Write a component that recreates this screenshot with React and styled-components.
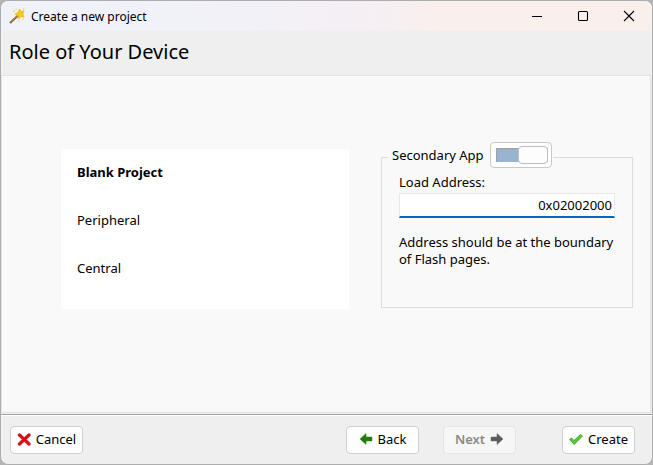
import React, { useState } from "react";
import styled, { createGlobalStyle } from "styled-components";

const GlobalStyle = createGlobalStyle`
  *, *::before, *::after { box-sizing: border-box; }
  body { margin: 0; background: #b4b4b4; }
  body, button, input {
    font-family: "Noto Sans", "Open Sans", sans-serif;
    font-size: 13px;
    line-height: 17px;
    color: #000;
  }
`;

const Window = styled.div`
  display: flex;
  flex-direction: column;
  min-height: 100vh;
  border: 1px solid #adadad;
  border-radius: 8px;
  background: #efefef;
  overflow: hidden;
`;

const TitleBar = styled.header`
  display: flex;
  align-items: center;
  height: 30px;
  padding-left: 8px;
  background: linear-gradient(90deg, #f0f2fa 0%, #f2f1f8 38%, #f5eff4 55%, #f9f0ed 68%, #f9f0ec 100%);
`;

const AppTitle = styled.span`
  flex: 1;
  padding-left: 6px;
  font-size: 12px;
`;

const CaptionButton = styled.button`
  display: flex;
  align-items: center;
  justify-content: center;
  width: 46px;
  height: 30px;
  padding: 0;
  border: 0;
  background: transparent;
`;

const Heading = styled.h1`
  margin: 0;
  padding: 8px 8px 10px;
  font-size: 20px;
  line-height: 26px;
  font-weight: 400;
`;

const Body = styled.main`
  flex: 1;
  display: grid;
  grid-template-columns: 8fr 7fr;
  align-items: start;
  gap: 32px;
  margin-right: 1px;
  padding: 66px 17px 16px 59px;
  border: 1px solid #e3e3e3;
  background: #f9f9f9;
`;

const RoleList = styled.ul`
  margin: 7px 0 0;
  padding: 0 0 16px;
  list-style: none;
  background: #fff;
`;

const RoleButton = styled.button`
  display: block;
  width: 100%;
  height: 48px;
  padding: 0 16px 2px;
  border: 0;
  background: transparent;
  text-align: left;
  font-weight: ${(p) => (p.$selected ? 700 : 400)};
`;

const Group = styled.fieldset`
  min-width: 0;
  min-height: 166px;
  margin: 0;
  padding: 0 17px;
  border: 1px solid #dcdcdc;
`;

const Legend = styled.legend`
  display: flex;
  margin-left: -11px;
  padding: 0 1px 5px 4px;
`;

const LegendLabel = styled.label`
  display: flex;
  align-items: center;
  gap: 6px;
  line-height: 26px;
`;

const SwitchFrame = styled.span`
  display: flex;
  align-items: center;
  width: 62px;
  height: 26px;
  padding: 0 3px 0 5px;
  border: 1px solid #c9c9c9;
  border-radius: 4px;
  background: #fdfdfd;
`;

const Switch = styled.input`
  appearance: none;
  display: flex;
  align-items: center;
  justify-content: ${(p) => (p.checked ? "flex-end" : "flex-start")};
  width: 100%;
  height: 14px;
  margin: 0;
  background: ${(p) => (p.checked ? "#99b4d1" : "#dcdcdc")};
  box-shadow: inset 1px 1px #a0a0a0;

  &::before {
    content: "";
    flex: none;
    width: 30px;
    height: 18px;
    border: 1px solid #bdbdbd;
    border-radius: 4px;
    background: #fdfdfd;
  }
`;

const FieldLabel = styled.label`
  display: block;
  margin-bottom: 2px;
  line-height: 18px;
`;

const AddressInput = styled.input`
  display: block;
  width: 100%;
  height: 25px;
  padding: 0 2px;
  border: 1px solid #e8e8e8;
  border-bottom: 2px solid #0067c0;
  background: #fff;
  text-align: right;
  outline: none;
`;

const Hint = styled.p`
  margin: 16px 0 0;
`;

const Footer = styled.footer`
  display: flex;
  align-items: center;
  gap: 24px;
  height: 50px;
  margin-top: 1px;
  padding: 0 17px 0 9px;
  border-top: 1px solid #a0a0a0;
  box-shadow: inset 0 1px #fff;
`;

const Spacer = styled.div`
  flex: 1;
`;

const ActionButton = styled.button`
  display: flex;
  align-items: center;
  justify-content: center;
  gap: 5px;
  width: 73px;
  height: 28px;
  padding: 0;
  border: 1px solid #cfcfcf;
  border-radius: 4px;
  background: #fdfdfd;

  &:disabled {
    border-color: #e5e5e5;
    background: #f6f6f6;
    color: #8a8a8a;
    font-weight: 600;
  }
`;

const CreateSlot = styled.div`
  margin-left: 22px;
`;

const WandIcon = () => (
  <svg width="16" height="16" viewBox="0 0 16 16" aria-hidden="true">
    <path d="M1 15 9 7.500" stroke="#83602f" strokeWidth="2" />
    <path d="M1 14.500 8.500 7.500" stroke="#c79a58" strokeWidth="0.800" />
    <path d="m10.500 1 1.500 2.500 3-.5-1.300 3 1.300 3-3-.6L9.500 11 9 7.600 6 6l3-1.500z" fill="#f9cc14" stroke="#eeb81d" strokeWidth="0.900" />
    <path d="M4 2.500h2v1.500H4zM6.500 0.500h1.500v1H6.500zM14 0.500h1.500V2H14zM13.500 10.500h1.500V12h-1.500zM9 12h1.500v1.500H9z" fill="#f3d77c" />
  </svg>
);

const MinimizeIcon = () => (
  <svg width="12" height="12" viewBox="0 0 12 12" aria-hidden="true">
    <path d="M1 6.500h10" stroke="#000" />
  </svg>
);

const MaximizeIcon = () => (
  <svg width="12" height="12" viewBox="0 0 12 12" aria-hidden="true">
    <rect x="1.500" y="1.500" width="9" height="9" rx="1" fill="none" stroke="#000" strokeWidth="1.100" />
  </svg>
);

const CloseIcon = () => (
  <svg width="12" height="12" viewBox="0 0 12 12" aria-hidden="true">
    <path d="m1 1 10 10M11 1 1 11" stroke="#000" strokeWidth="1.100" />
  </svg>
);

const CancelIcon = () => (
  <svg width="14" height="14" viewBox="0 0 14 14" aria-hidden="true">
    <path d="m2.500 2 9.500 9M12 2l-9.500 9" stroke="#b5353b" strokeWidth="3.400" strokeLinecap="round" />
    <path d="m2.500 2 9.500 9M12 2l-9.500 9" stroke="#e30613" strokeWidth="2.200" strokeLinecap="round" />
  </svg>
);

const ArrowLeftIcon = () => (
  <svg width="14" height="14" viewBox="0 0 14 14" aria-hidden="true">
    <path d="M1 6 7 0.500v3.500h6v4H7V11.500z" fill="#217a0b" stroke="#2f8c1a" strokeWidth="0.500" />
  </svg>
);

const ArrowRightIcon = () => (
  <svg width="14" height="14" viewBox="0 0 14 14" aria-hidden="true">
    <path d="M13 6 7 0.500v3.500H1v4h6V11.500z" fill="#5c5c5c" stroke="#6a6a6a" strokeWidth="0.500" />
  </svg>
);

const CheckIcon = () => (
  <svg width="14" height="14" viewBox="0 0 14 14" aria-hidden="true">
    <path d="m0.500 6.500 2-1.500L5 7.500 11.500 1.500 13.500 3 5.200 11.500z" fill="#55c832" stroke="#3f9a2e" strokeWidth="0.800" />
  </svg>
);

const roles = ["Blank Project", "Peripheral", "Central"];

export default function App() {
  const [role, setRole] = useState(roles[0]);
  const [secondary, setSecondary] = useState(true);
  const [address, setAddress] = useState("0x02002000");

  return (
    <>
      <GlobalStyle />
      <Window>
        <TitleBar>
          <WandIcon />
          <AppTitle>Create a new project</AppTitle>
          <CaptionButton type="button" aria-label="Minimize"><MinimizeIcon /></CaptionButton>
          <CaptionButton type="button" aria-label="Maximize"><MaximizeIcon /></CaptionButton>
          <CaptionButton type="button" aria-label="Close"><CloseIcon /></CaptionButton>
        </TitleBar>
        <Heading>Role of Your Device</Heading>
        <Body>
          <RoleList aria-label="Role">
            {roles.map((name) => (
              <li key={name}>
                <RoleButton
                  type="button"
                  $selected={name === role}
                  aria-pressed={name === role}
                  onClick={() => setRole(name)}
                >
                  {name}
                </RoleButton>
              </li>
            ))}
          </RoleList>
          <Group>
            <Legend>
              <LegendLabel>
                Secondary App
                <SwitchFrame>
                  <Switch
                    type="checkbox"
                    role="switch"
                    checked={secondary}
                    onChange={(e) => setSecondary(e.target.checked)}
                  />
                </SwitchFrame>
              </LegendLabel>
            </Legend>
            <FieldLabel htmlFor="load-address">Load Address:</FieldLabel>
            <AddressInput
              id="load-address"
              type="text"
              value={address}
              disabled={!secondary}
              onChange={(e) => setAddress(e.target.value)}
            />
            <Hint>Address should be at the boundary of Flash pages.</Hint>
          </Group>
        </Body>
        <Footer>
          <ActionButton type="button"><CancelIcon />Cancel</ActionButton>
          <Spacer />
          <ActionButton type="button"><ArrowLeftIcon />Back</ActionButton>
          <ActionButton type="button" disabled>Next<ArrowRightIcon /></ActionButton>
          <CreateSlot>
            <ActionButton type="button"><CheckIcon />Create</ActionButton>
          </CreateSlot>
        </Footer>
      </Window>
    </>
  );
}
